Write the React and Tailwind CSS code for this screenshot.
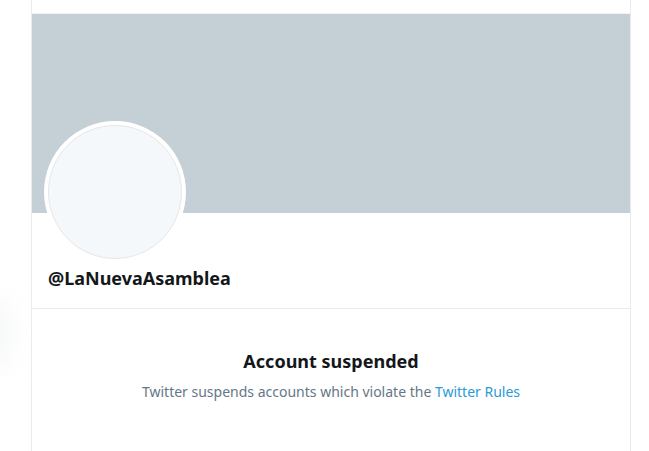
import React from "react";

const App = () => {
  return (
    <div
      className="relative w-[649px] h-[451px] overflow-hidden bg-white"
      style={{ fontFamily: '"Noto Sans", "Open Sans", sans-serif' }}
    >
      {/* faint blurred shape peeking from the left edge */}
      <div className="absolute left-[-40px] top-[295px] w-[52px] h-[75px] rounded-full bg-gray-200/30 blur-md"></div>

      <div className="ml-[31px] w-[600px] h-full border-x border-[#e6ecf0] pt-[13px]">
        <div className="h-px bg-[#eef3f7]"></div>

        {/* banner */}
        <div className="h-[199px] bg-[#c4cfd6]"></div>

        {/* avatar + handle */}
        <div className="relative px-4 h-[95px]">
          <div className="absolute left-[12px] top-[-92px] w-[142px] h-[142px] rounded-full bg-white p-[4px]">
            <div className="w-full h-full rounded-full bg-[#f5f8fa] border border-[#e6e6e6]"></div>
          </div>
          <div className="pt-[55px] text-[18px] font-bold text-[#14171a] leading-5">
            @LaNuevaAsamblea
          </div>
        </div>

        {/* suspended notice */}
        <div className="border-t border-[#e6ecf0] flex flex-col items-center pt-[40px]">
          <div className="text-[18px] font-bold text-[#14171a] leading-6">Account suspended</div>
          <div className="mt-[9px] text-[14px] text-[#657786] leading-5">
            Twitter suspends accounts which violate the{" "}
            <a href="#" className="text-[#2a9ad8]">Twitter Rules</a>
          </div>
        </div>
      </div>
    </div>
  );
};

export default App;
